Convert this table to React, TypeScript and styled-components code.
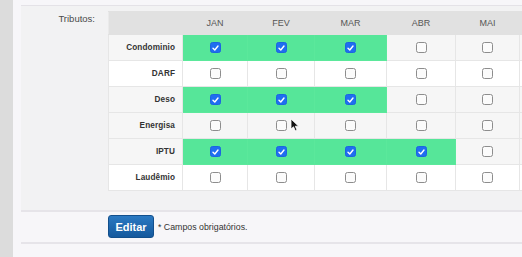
import React from "react";
import styled, { createGlobalStyle } from "styled-components";

const Global = createGlobalStyle`
  html, body { margin: 0; padding: 0; overflow: hidden; background: #f7f6f9; }
  body { font-family: "Liberation Sans", Arial, sans-serif; }
`;

const Page = styled.div`
  display: flex;
  width: 522px;
  height: 257px;
  overflow: hidden;
  position: relative;
`;

const SideStrip = styled.div`
  width: 13px;
  flex: none;
  background: #dcdcdc;
`;

const Panel = styled.div`
  flex: 1;
  background: #f7f6f9;
  padding-top: 5px;
  padding-left: 8px;
  min-width: 0;
`;

const FormSection = styled.section`
  border-top: 1px solid #e4e2e7;
  border-bottom: 2px solid #e6e4e9;
  background: #f2f2f3;
  padding: 5px 0 19px 0;
  display: flex;
  gap: 13px;
`;

const FieldLabel = styled.div`
  width: 74px;
  flex: none;
  text-align: right;
  font-size: 9.5px;
  color: #4a4a4a;
  padding-top: 2px;
`;

const Table = styled.table`
  border-collapse: collapse;
  table-layout: fixed;
  flex: none;
  font-size: 9.5px;
`;

const HeadCell = styled.th<{ $w: number }>`
  width: ${(p) => p.$w}px;
  height: 22px;
  padding: 0;
  background: #e1e1e1;
  color: #555;
  font-weight: normal;
  font-size: 9px;
  text-align: center;
  border: 1px solid #e1e1e1;
  border-left-color: #eaeaea;
`;

const Row = styled.tr<{ $alt: boolean }>`
  height: 26px;
  background: ${(p) => (p.$alt ? "#f6f6f6" : "#ffffff")};
`;

const RowLabel = styled.td`
  text-align: right;
  padding: 0 7px 0 0;
  font-weight: bold;
  color: #333;
  font-size: 8.2px;
  letter-spacing: 0.1px;
  border: 1px solid #e6e6e6;
`;

const Cell = styled.td<{ $on: boolean }>`
  padding: 0;
  text-align: center;
  vertical-align: middle;
  border: 1px solid ${(p) => (p.$on ? "#5be89b" : "#e6e6e6")};
  background: ${(p) => (p.$on ? "#56e699" : "transparent")};
`;

const Box = styled.span<{ $on: boolean }>`
  display: inline-flex;
  align-items: center;
  justify-content: center;
  width: 11px;
  height: 11px;
  box-sizing: border-box;
  border-radius: 2.5px;
  vertical-align: middle;
  border: 1px solid ${(p) => (p.$on ? "#1c64e0" : "#8d8d8d")};
  background: ${(p) => (p.$on ? "#1f6ef0" : "#fbfbfb")};
`;

const Footer = styled.div`
  display: flex;
  align-items: center;
  gap: 4px;
  padding: 3px 0 4px 87px;
  border-bottom: 2px solid #e6e4e9;
`;

const Button = styled.button`
  width: 46px;
  height: 23px;
  border: 1px solid #124f8c;
  border-radius: 3px;
  background: linear-gradient(#2b79c2, #15599d);
  color: #fff;
  font-family: "Liberation Sans", Arial, sans-serif;
  font-weight: bold;
  font-size: 11px;
  padding: 0;
`;

const Note = styled.span`
  font-size: 8.8px;
  color: #333;
`;

const Cursor = styled.svg`
  position: absolute;
  left: 290px;
  top: 118px;
`;

const months = ["JAN", "FEV", "MAR", "ABR", "MAI", ""];
const widths = [64, 66, 71, 68, 63, 70];

const rows: { name: string; checks: boolean[] }[] = [
  { name: "Condominio", checks: [true, true, true, false, false, false] },
  { name: "DARF", checks: [false, false, false, false, false, false] },
  { name: "Deso", checks: [true, true, true, false, false, false] },
  { name: "Energisa", checks: [false, false, false, false, false, false] },
  { name: "IPTU", checks: [true, true, true, true, false, false] },
  { name: "Laudêmio", checks: [false, false, false, false, false, false] },
];

const Check = ({ on }: { on: boolean }) => (
  <Box $on={on}>
    {on && (
      <svg width="7" height="6" viewBox="0 0 7 6">
        <path d="M1 3.2 L2.8 5 L6 1" fill="none" stroke="#fff" strokeWidth="1.4" strokeLinecap="round" strokeLinejoin="round" />
      </svg>
    )}
  </Box>
);

export default function App() {
  return (
    <Page>
      <Global />
      <SideStrip />
      <Panel>
        <FormSection>
          <FieldLabel>Tributos:</FieldLabel>
          <Table>
            <thead>
              <tr>
                <HeadCell $w={73} />
                {months.map((m, i) => (
                  <HeadCell key={i} $w={widths[i]}>
                    {m}
                  </HeadCell>
                ))}
              </tr>
            </thead>
            <tbody>
              {rows.map((r, ri) => (
                <Row key={r.name} $alt={ri % 2 === 0 || r.name === "Energisa"}>
                  <RowLabel>{r.name}</RowLabel>
                  {r.checks.map((c, ci) => (
                    <Cell key={ci} $on={c}>
                      <Check on={c} />
                    </Cell>
                  ))}
                </Row>
              ))}
            </tbody>
          </Table>
        </FormSection>
        <Footer>
          <Button>Editar</Button>
          <Note>* Campos obrigatórios.</Note>
        </Footer>
      </Panel>
      <Cursor width="10" height="14" viewBox="0 0 10 14">
        <path d="M1 1 L1 11 L3.5 8.8 L5.3 12.8 L7 12 L5.3 8.2 L8.6 8.2 Z" fill="#111" stroke="#fff" strokeWidth="0.8" />
      </Cursor>
    </Page>
  );
}
